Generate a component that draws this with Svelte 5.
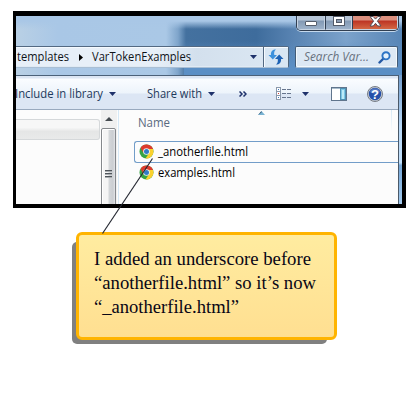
<script>
  const files = ['_anotherfile.html', 'examples.html'];
  const widths = [90, 77];
  const note = [
    ['I added an underscore before', 217],
    ['“anotherfile.html” so it’s now', 222],
    ['“_anotherfile.html”', 145]
  ];
</script>

{#snippet label(text, width, cls = '')}
  <svg class="label {cls}" {width} height="18" style:width="{width}px">
    <text x="0" y="13" textLength={width} lengthAdjust="spacingAndGlyphs">{text}</text>
  </svg>
{/snippet}

{#snippet down()}
  <svg class="down" width="7" height="4" viewBox="0 0 7 4"><path d="M0 0h7L3.5 4z" fill="#1f326b" /></svg>
{/snippet}

<main>
  <section class="window">
    <header class="glass">
      <div class="captions">
        <span class="min"><svg width="12" height="5" viewBox="0 0 12 5"><rect x=".5" y=".5" width="11" height="4" rx=".5" fill="#fff" stroke="#565e6c" /></svg></span>
        <span class="max"><svg width="12" height="10" viewBox="0 0 12 10"><rect x=".5" y=".5" width="11" height="9" fill="#fff" stroke="#525a68" /><rect x="3.5" y="3.5" width="5" height="3" fill="#899bb2" stroke="#525a68" /></svg></span>
        <span class="close"><svg width="13" height="11" viewBox="0 0 13 11"><path d="M1 .5h3.2l2.3 2.6L8.8.5H12L8.4 5.2 12 10H8.7L6.5 7.3 4.3 10H1l3.6-4.8z" fill="#fff" stroke="#54505b" /></svg></span>
      </div>
      <div class="navrow">
        <div class="address">
          {@render label('templates', 52)}
          <svg class="crumb" width="4" height="7" viewBox="0 0 4 7"><path d="M0 0v7l4-3.5z" fill="#000" /></svg>
          {@render label('VarTokenExamples', 99)}
          <span class="drop">{@render down()}</span>
          <span class="refresh">
            <svg width="16" height="16" viewBox="0 0 16 16"><path d="M8 .5C4.500.5 2.500 2.500 3 6H.5L4.800 10.500 9 6H6.300C5.800 3.500 6.400 1.600 8 .5z" fill="#3d91dc" /><path d="M8 15.500c3.500 0 5.500-2 5-5.500h2.500L11.200 5.500 7 10h2.700c.5 2.500-.1 4.400-1.700 5.500z" fill="#1e62b4" /></svg>
          </span>
        </div>
        <div class="search">
          {@render label('Search Var...', 65, 'hint')}
          <svg width="13" height="13" viewBox="0 0 13 13"><path d="M5.500 7.500L1.500 11.500" stroke="#2459a4" stroke-width="2.400" stroke-linecap="round" /><circle cx="8" cy="4.800" r="3.600" fill="#e5f1fb" stroke="#2d74c5" stroke-width="1.900" /></svg>
        </div>
      </div>
    </header>
    <div class="body">
      <div class="client">
        <nav class="toolbar">
          <span class="t1">{@render label('Include in library', 88)}</span>
          {@render down()}
          <span class="t2">{@render label('Share with', 55)}</span>
          {@render down()}
          <svg class="more" width="8" height="6" viewBox="0 0 8 6"><path d="M.5.5L3 3 .5 5.5M4.500.5L7 3 4.500 5.5" fill="none" stroke="#1f326b" stroke-width="1.5" /></svg>
          <svg class="views" width="16" height="13" viewBox="0 0 16 13">
            {#each [0, 4, 8] as y, i}
              <rect x=".5" y={y + 0.5} width="4" height="4" fill="#fff" stroke="#8b98aa" />
              <rect x="2" y={y + 2} width="1" height="1" fill={i === 1 ? '#d33b32' : '#3d78bb'} />
              <path d="M6 {y + 2.5}h4M11 {y + 2.5}h4" stroke="#66758d" />
            {/each}
          </svg>
          {@render down()}
          <svg class="pane" width="16" height="14" viewBox="0 0 16 14"><rect x=".5" y=".5" width="15" height="13" fill="#fff" stroke="#60758d" /><path d="M1 1.5h14" stroke="#a8bccb" /><rect x="9.5" y="1.5" width="5" height="11" fill="#7dc7e6" stroke="#4e91b4" /><path d="M12 3v9" stroke="#bcebf8" stroke-width="2" /></svg>
          <svg class="help" width="16" height="16" viewBox="0 0 16 16"><circle cx="8" cy="8" r="7.5" fill="#c9ced4" stroke="#777d86" /><circle cx="8" cy="8" r="6.2" fill="#2450aa" /><path d="M3 6a5.2 5.2 0 0 1 10 0q-5 3-10 0" fill="#5578c0" /><text x="8" y="12.5" text-anchor="middle" class="q">?</text></svg>
        </nav>
        <div class="content">
          <aside><div class="selected"></div></aside>
          <div class="scroll">
            <svg width="8" height="4" viewBox="0 0 8 4"><path d="M0 4h8L4 0z" fill="#454b50" /></svg>
            <div class="thumb"><i></i><i></i><i></i></div>
          </div>
          <div class="files">
            <div class="head">{@render label('Name', 32)}<svg class="sort" width="7" height="4" viewBox="0 0 7 4"><path d="M0 4h7L3.5 0z" fill="#79b3d2" /><path d="M0 4L3.5 0v1.5z" fill="#345571" /></svg><span class="colend"></span></div>
            {#each files as file, i}
              <div class="file" class:focus={i === 0}>
                <svg class="chrome" width="15" height="15" viewBox="0 0 15 15"><circle cx="7.5" cy="7.5" r="7" fill="#36a344" /><path d="M1.500 4A7 7 0 0 1 14 5H7.5L4.5 9z" fill="#dd3b2d" /><path d="M7.5 5H14A7 7 0 0 1 6.5 14.4L10.3 8.8z" fill="#fbd12d" /><circle cx="7.5" cy="7.5" r="3.3" fill="#f4f5ef" /><circle cx="7.5" cy="7.5" r="2.5" fill="#317cc6" /></svg>
                {@render label(file, widths[i])}
              </div>
            {/each}
          </div>
        </div>
      </div>
      <div class="edge"></div>
    </div>
  </section>
  <section class="note">
    {#each note as [text, width]}
      <svg {width} height="24"><text x="0" y="18" textLength={width} lengthAdjust="spacingAndGlyphs">{text}</text></svg>
    {/each}
  </section>
  <svg class="leader" width="419" height="419"><path d="M152.5 158.5L102.5 233.5" stroke="#242831" stroke-width="1.15" /></svg>
</main>

<style>
  :global(body) { background: #fff; }
  main { position: relative; z-index: 0; width: 419px; height: 419px; overflow: hidden; padding: 11px 13px; box-sizing: border-box; font-family: "Open Sans", "Noto Sans", sans-serif; }
  * { box-sizing: border-box; }
  svg { display: block; flex: none; }
  .label { overflow: visible; font-size: 12px; fill: #101318; }
  .window { width: 393px; height: 197px; border: 5px solid #000; border-width: 5px 4px 4px 3px; overflow: hidden; background: #aac7e4; }
  .glass { height: 59px; background: linear-gradient(#a9c7e6 0 5px, #a9c7e600 13px), linear-gradient(#5b8fc500 25px, #5b8fc5 52px) 168px 0 / 218px 59px no-repeat, linear-gradient(90deg, #b9d0e5 0, #a9c7e6 42px, #aac8e6 150px, #7fa5cb 162px, #44719f 170px, #3e6c9c 240px, #5782b1 275px, #7ba2cb 330px, #5785b6 386px); }
  .captions { display: flex; width: 103px; height: 15px; margin-left: 280px; border: 1px solid #303e51; border-top: 0; border-radius: 0 0 5px 5px; overflow: hidden; box-shadow: 0 1px #c5d9ed; }
  .captions span { display: flex; justify-content: center; border: 1px solid #c6d3e2; border-top: 0; }
  .min, .max { background: linear-gradient(#b5c4d6 0 4px, #8299b4 5px, #9db2ca); }
  .min { width: 28px; padding-top: 5px; }
  .captions .max { width: 27px; border-left-color: #303e51; }
  .captions .close { width: 46px; border-left-color: #303e51; background: linear-gradient(#db8f7e 0 4px, #bd3423 5px, #d36744); }
  .navrow { display: flex; height: 22px; margin-top: 15px; gap: 6px; }
  .address { display: flex; align-items: center; width: 273px; border: 1px solid #536982; border-bottom-color: #a9bfd5; border-left: 0; border-right-color: #4e647b; box-shadow: inset 0 1px #f5faff, inset 0 -1px #e0eaf4; background: linear-gradient(90deg, #e7eff8 140px, #d3e0ed 180px, #dce8f4); padding-left: 1px; border-radius: 0 2px 2px 0; }
  .crumb { margin: 0 9px 0 10px; }
  .drop { display: flex; align-items: center; justify-content: center; width: 19px; margin-left: 53px; }
  .refresh { display: flex; align-items: center; justify-content: center; height: 20px; flex: 1; border-left: 1px solid #536982; background: #d8e6f3; box-shadow: inset 1px 1px #f5faff; }
  .search { display: flex; align-items: center; width: 103px; padding-left: 8px; border: 1px solid #425b77; border-bottom-color: #a9bfd5; border-radius: 2px; background: #dce8f4; box-shadow: inset 0 0 0 1px #f2f8fc; gap: 9px; }
  .hint { font-style: italic; fill: #68727e; }
  .body { display: flex; height: 129px; }
  .client { width: 383px; border-top: 1px solid #4b6179; border-right: 1px solid #4b5968; background: #fcfcfc; }
  .edge { flex: 1; background: linear-gradient(#739dcc, #b8d8f7 40%, #c2e0fb 68%, #77a8d8 70%, #a4cbee); }
  .toolbar { display: flex; align-items: center; height: 34px; padding-top: 2px; border-bottom: 1px solid #98a9be; background: linear-gradient(#dce6f4 0 2px, #fafcff 3px, #edf4fb 17px, #dce6f4 18px, #dce6f4); }
  .toolbar .label { fill: #1e395b; }
  .t1 { margin: 0 6px 0 -1px; }
  .t2 { margin: 0 6px 0 31px; }
  .more { margin: 0 29px 0 24px; }
  .views { margin-right: 10px; }
  .pane { margin: 0 20px 0 22px; }
  .q { font: bold 13px "Liberation Sans", sans-serif; fill: #fff; }
  .content { display: flex; height: 94px; }
  aside { width: 85px; padding-top: 9px; }
  .selected { width: 84px; height: 21px; border: 1px solid #d5d8da; border-left: 0; border-radius: 0 3px 3px 0; background: linear-gradient(#f7f7f7 40%, #e5e6e6 60%, #e9eaea); }
  .scroll { width: 16px; background: #f0f0f0; padding-top: 7px; }
  .scroll > svg { margin-left: 4px; }
  .thumb { width: 15px; height: 90px; margin-top: 7px; padding: 41px 3px 0 3px; border: 1px solid #85888c; border-radius: 2px; box-shadow: inset 1px 1px #fff; background: linear-gradient(90deg, #f5f5f5 0 6px, #d4d7da 7px, #cbced2 11px, #e3e5e8); }
  .thumb i { display: block; width: 7px; height: 2px; margin-bottom: 1px; border-top: 1px solid #4f555b; background: #a9adb1; }
  .files { width: 281px; margin-left: 1px; border-left: 1px solid #d6e8f5; padding-left: 15px; }
  .head { display: flex; height: 31px; padding: 4px 0 0 4px; }
  .head .label { fill: #596980; }
  .sort { margin: -3px 0 0 88px; }
  .colend { width: 1px; height: 22px; margin: -4px 0 0 126px; background: linear-gradient(#d8e9f5, #fcfcfc); }
  .file { display: flex; align-items: center; height: 20px; gap: 4px; padding-left: 5px; }
  .chrome { margin-top: -2px; }
  .file .label { fill: #000; }
  .file.focus { height: 22px; border: 1px solid #729dc9; border-right: 0; border-radius: 3px 0 0 3px; padding-left: 4px; }
  .note { position: relative; width: 261px; height: 108px; margin: 24px 0 0 63px; padding: 12px 15px; border: 3px solid #ffb400; border-radius: 6px; background: linear-gradient(#ffeca0, #ffdf91); font: 19px "Liberation Serif", serif; fill: #090616; }
  .note::before { content: ""; position: absolute; z-index: -1; inset: 7px 7px -7px -7px; border-radius: 5px; background: #808080; }
  .note svg { overflow: visible; }
  .leader { position: absolute; inset: 0; pointer-events: none; }
</style>
